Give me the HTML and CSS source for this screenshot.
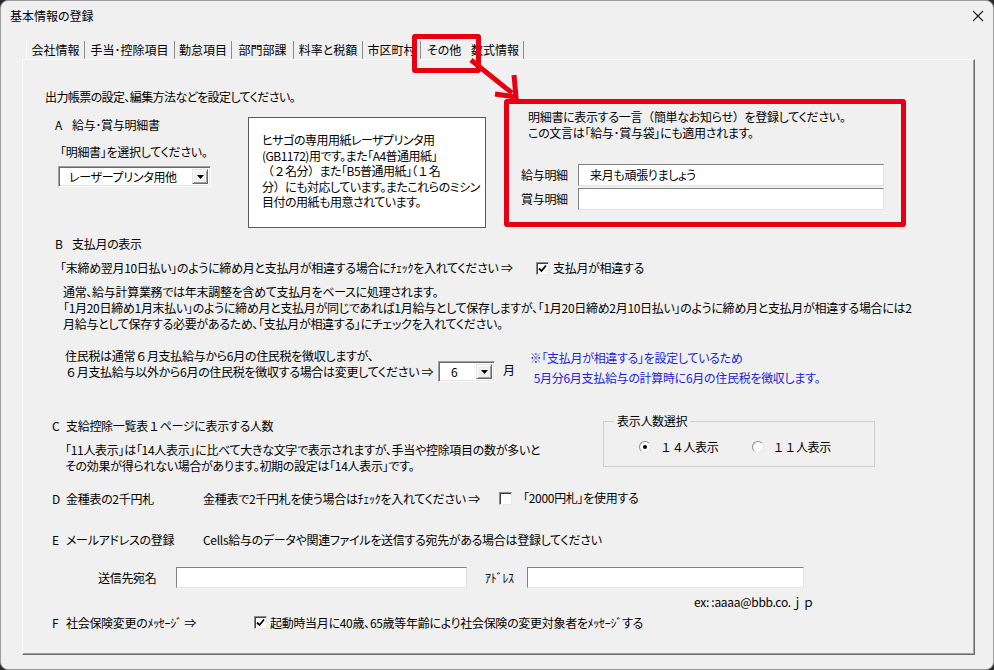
FILE: index.html
```html
<!DOCTYPE html>
<html lang="ja">
<head>
<meta charset="utf-8">
<title>基本情報の登録</title>
<link rel="stylesheet" href="styles.css">
</head>
<body>
<div class="window">
  <div class="titlebar">
    <span class="title">基本情報の登録</span>
    <svg class="close" width="12" height="12" viewBox="0 0 12 12"><path d="M1 1L11 11M11 1L1 11" stroke="#1a1a1a" stroke-width="1.1" fill="none"/></svg>
  </div>
  <div class="tabs">
    <span class="tab t1">会社情報</span>
    <span class="tab t2">手当･控除項目</span>
    <span class="tab t3">勤怠項目</span>
    <span class="tab t4">部門部課</span>
    <span class="tab t5">料率と税額</span>
    <span class="tab t6">市区町村</span>
    <span class="tab t7 active">その他</span>
    <span class="tab t8">数式情報</span>
  </div>
  <div class="panel">
    <div class="top">
      <div class="top-left">
        <div class="line intro">出力帳票の設定、編集方法などを設定してください。</div>
        <div class="a-row">
          <div class="a-col">
            <div class="line"><span class="key">A</span>給与･賞与明細書</div>
            <div class="line a-prompt">「明細書」を選択してください。</div>
            <div class="combo combo-a"><span class="combo-text">レーザープリンタ用他</span><span class="combo-btn"><svg width="7" height="4" viewBox="0 0 7 4"><path d="M0 0H7L3.5 4Z" fill="#000"/></svg></span></div>
          </div>
          <div class="infobox">ヒサゴの専用用紙レーザプリンタ用<br>(GB1172)用です。また「A4普通用紙」<br><span class="fw">（２</span>名分<span class="fw">）</span>また「B5普通用紙」<span class="fw">（１</span>名<br>分<span class="fw">）</span>にも対応しています。またこれらのミシン<br>目付の用紙も用意されています。</div>
        </div>
      </div>
      <div class="redbox">
        <div class="note">明細書に表示する一言<span class="fw">（</span>簡単なお知らせ<span class="fw">）</span>を登録してください。<br>この文言は「給与･賞与袋」にも適用されます。</div>
        <div class="msg-row first"><span class="msg-label">給与明細</span><div class="field msg-field">来月も頑張りましょう</div></div>
        <div class="msg-row"><span class="msg-label">賞与明細</span><div class="field msg-field"></div></div>
      </div>
    </div>

    <div class="line sec-b-title"><span class="key">B</span>支払月の表示</div>
    <div class="b-line">
      <span class="b-text">「末締め翌月10日払い」のように締め月と支払月が相違する場合にﾁｪｯｸを入れてください ⇒</span>
      <span class="check checked"><svg width="9" height="9" viewBox="0 0 9 9"><path d="M1 4.5L3.5 7L8 1.5" stroke="#000" stroke-width="1.8" fill="none"/></svg></span>
      <span class="check-label">支払月が相違する</span>
    </div>
    <div class="b-para">通常、給与計算業務では年末調整を含めて支払月をベースに処理されます。<br>「1月20日締め1月末払い」のように締め月と支払月が同じであれば1月給与として保存しますが、「1月20日締め2月10日払い」のように締め月と支払月が相違する場合には2<br>月給与として保存する必要があるため、「支払月が相違する」にチェックを入れてください。</div>
    <div class="b-tax">
      <div class="tax-text">住民税は通常<span class="fw">６</span>月支払給与から6月の住民税を徴収しますが、<br><span class="fw">６</span>月支払給与以外から6月の住民税を徴収する場合は変更してください ⇒</div>
      <div class="combo combo-m"><span class="combo-text">6</span><span class="combo-btn"><svg width="7" height="4" viewBox="0 0 7 4"><path d="M0 0H7L3.5 4Z" fill="#000"/></svg></span></div>
      <div class="month">月</div>
      <div class="blue">※「支払月が相違する」を設定しているため<br><span class="indent">5月分6月支払給与の計算時に6月の住民税を徴収します。</span></div>
    </div>

    <div class="sec-c">
      <div class="c-left">
        <div class="line"><span class="key short">C</span>支給控除一覧表<span class="fw">１</span>ページに表示する人数</div>
        <div class="c-text">「11人表示」は「14人表示」に比べて大きな文字で表示されますが、手当や控除項目の数が多いと<br>その効果が得られない場合があります。初期の設定は「14人表示」です。</div>
      </div>
      <fieldset class="group">
        <legend>表示人数選択</legend>
        <div class="radios">
          <span class="radio on"></span><span class="radio-label fw">１４人表示</span>
          <span class="radio second"></span><span class="radio-label fw">１１人表示</span>
        </div>
      </fieldset>
    </div>

    <div class="row sec-d">
      <span class="col1"><span class="key short">D</span>金種表の2千円札</span>
      <span class="col2">金種表で2千円札を使う場合はﾁｪｯｸを入れてください ⇒</span>
      <span class="check"></span>
      <span class="check-label d-label">「2000円札」を使用する</span>
    </div>

    <div class="row sec-e">
      <span class="col1"><span class="key short">E</span>メールアドレスの登録</span>
      <span>Cells給与のデータや関連ファイルを送信する宛先がある場合は登録してください</span>
    </div>
    <div class="e-fields">
      <span class="e-label">送信先宛名</span>
      <div class="field e-name"></div>
      <span class="e-label2">ｱﾄﾞﾚｽ</span>
      <div class="field e-addr"></div>
    </div>
    <div class="line e-ex">ex: :aaaa@bbb.co.<span class="fw">ｊｐ</span></div>

    <div class="row sec-f">
      <span class="f-col1"><span class="key short">F</span>社会保険変更のﾒｯｾｰｼﾞ ⇒</span>
      <span class="check checked"><svg width="9" height="9" viewBox="0 0 9 9"><path d="M1 4.5L3.5 7L8 1.5" stroke="#000" stroke-width="1.8" fill="none"/></svg></span>
      <span class="f-label">起動時当月に40歳、65歳等年齢により社会保険の変更対象者をﾒｯｾｰｼﾞする</span>
    </div>
  </div>
  <svg class="arrow" width="994" height="670" viewBox="0 0 994 670">
    <path d="M471 60L512 93" stroke="#e60012" stroke-width="5" fill="none"/>
    <path d="M495 94L516 97L514 75" stroke="#e60012" stroke-width="5" fill="none" stroke-linejoin="miter"/>
  </svg>
</div>
</body>
</html>
```

FILE: styles.css
```css
* { box-sizing: border-box; }
html, body { margin: 0; padding: 0; }
body {
  width: 994px;
  height: 670px;
  overflow: hidden;
  background: #2b2b2b;
  font-family: "Noto Sans CJK JP", "Noto Sans", sans-serif;
  font-size: 12px;
  color: #000;
  font-feature-settings: "palt";
}
.fw { font-feature-settings: normal; }
.window {
  position: relative;
  width: 994px;
  height: 670px;
  background: #f0f0f0;
  border: 1px solid #9c9c9c;
  border-radius: 8px;
}
.titlebar {
  height: 28px;
  display: flex;
  align-items: center;
  justify-content: space-between;
  padding: 2px 9px 0 9px;
}
.title { line-height: 16px; }
.close { display: block; }

.tabs {
  display: flex;
  margin: 12px 0 0 25px;
  height: 18px;
}
.tab {
  display: block;
  height: 18px;
  line-height: 17px;
  text-align: center;
  white-space: nowrap;
  border-right: 1px solid #8a8a8a;
}
.t1 { width: 59px; border-left: 1px solid #fff; }
.t2 { width: 90px; }
.t3 { width: 57px; }
.t4 { width: 62px; }
.t5 { width: 69px; }
.t6 { width: 58px; }
.t7 { width: 46px; border-right: none; }
.t8 { width: 57px; }
.active { position: relative; }
.active::after {
  content: "";
  position: absolute;
  left: -9px;
  top: -7px;
  width: 59px;
  height: 29px;
  border: 5px solid #e60012;
  border-radius: 3px;
  z-index: 2;
}

.panel {
  margin-left: 21px;
  width: 953px;
  height: 596px;
  border: 1px solid;
  border-color: #fff #6d6d6d #6d6d6d #fff;
  box-shadow: inset -1px -1px 0 #a0a0a0;
  letter-spacing: -0.3px;
}
.line { line-height: 16px; white-space: nowrap; }
.intro { letter-spacing: -0.6px; }
.key { display: inline-block; width: 17px; }
.key.short { width: 14px; }

.top { display: flex; align-items: flex-start; margin-top: 29px; }
.top-left { margin-left: 22px; }
.a-row { display: flex; margin-top: 12px; }
.a-col { margin-left: 10px; width: 193px; }
.a-prompt { margin-top: 11px; padding-left: 5px; }

.combo {
  display: flex;
  align-items: stretch;
  height: 21px;
  background: #fff;
  border: 1px solid;
  border-color: #a0a0a0 #fdfdfd #fdfdfd #a0a0a0;
  box-shadow: inset 1px 1px 0 #696969, inset -1px -1px 0 #e3e3e3;
  padding: 2px;
}
.combo-a { margin: 6px 0 0 3px; width: 153px; }
.combo-text { flex: 1; padding-left: 8px; line-height: 15px; white-space: nowrap; }
.combo-btn {
  width: 16px;
  background: #f0f0f0;
  border: 1px solid;
  border-color: #e3e3e3 #696969 #696969 #e3e3e3;
  box-shadow: inset 1px 1px 0 #fff, inset -1px -1px 0 #a0a0a0;
  display: flex;
  align-items: center;
  justify-content: center;
}
.combo-btn svg { display: block; }

.infobox {
  width: 238px;
  height: 111px;
  background: #fff;
  border: 1px solid #5a5a5a;
  padding: 14px 0 0 13px;
  line-height: 15.5px;
  white-space: nowrap;
  letter-spacing: -0.5px;
}

.redbox {
  margin: 10px 0 0 18px;
  width: 402px;
  height: 128px;
  border: 5px solid #e60012;
  border-radius: 3px;
  padding: 5px 0 0 12px;
}
.note { margin-left: 7px; line-height: 16px; white-space: nowrap; }
.msg-row { display: flex; align-items: center; margin-top: 2px; }
.msg-row.first { margin-top: 23px; }
.msg-label { width: 57px; line-height: 16px; }
.field {
  height: 22px;
  background: #fff;
  border: 1px solid;
  border-color: #828282 #e3e3e3 #e3e3e3 #828282;
  line-height: 20px;
  white-space: nowrap;
}
.msg-field { width: 306px; padding-left: 11px; }

.sec-b-title { margin: 8px 0 0 32px; }
.b-line { display: flex; align-items: center; margin: 8px 0 0 37px; height: 16px; }
.b-text { width: 476px; white-space: nowrap; line-height: 16px; }
.check {
  display: flex;
  align-items: center;
  justify-content: center;
  width: 13px;
  height: 13px;
  background: #fff;
  border: 1px solid;
  border-color: #8a8a8a #e8e8e8 #e8e8e8 #8a8a8a;
  box-shadow: inset 1px 1px 0 #404040;
}
.check svg { display: block; }
.check-label { margin-left: 4px; line-height: 16px; white-space: nowrap; }
.b-para { margin: 8px 0 0 40px; line-height: 16px; white-space: nowrap; }
.b-tax { display: flex; align-items: flex-start; margin: 16px 0 0 42px; }
.tax-text { width: 373px; line-height: 16px; white-space: nowrap; }
.combo-m { width: 57px; margin-top: 13px; }
.combo-m .combo-text { padding-left: 10px; }
.month { margin: 14px 0 0 8px; line-height: 16px; }
.blue { margin-left: 15px; line-height: 20px; color: #2424d6; white-space: nowrap; }
.indent { padding-left: 4px; }

.sec-c { display: flex; align-items: flex-start; margin-top: 25px; }
.c-left { margin: 5px 0 0 29px; width: 551px; }
.c-text { margin: 8px 0 0 13px; line-height: 16px; white-space: nowrap; }
.group {
  margin: 0;
  width: 272px;
  padding: 0 0 11px 10px;
  border: 1px solid #cdcdcd;
  min-inline-size: 0;
}
.group legend { padding: 0 3px; line-height: 16px; }
.radios { display: flex; align-items: center; height: 16px; margin-top: 10px; }
.radio {
  width: 12px;
  height: 12px;
  border-radius: 50%;
  background: #fff;
  border: 1px solid;
  border-color: #8a8a8a #e3e3e3 #e3e3e3 #8a8a8a;
  margin-left: 25px;
  position: relative;
}
.radio.on::after {
  content: "";
  position: absolute;
  left: 3px;
  top: 3px;
  width: 4px;
  height: 4px;
  border-radius: 50%;
  background: #000;
}
.radio.second { margin-left: 33px; }
.radio-label { margin-left: 9px; line-height: 16px; }

.row { display: flex; align-items: center; height: 16px; margin-left: 29px; white-space: nowrap; }
.col1 { width: 151px; }
.col2 { width: 296px; }
.sec-d { margin-top: 16px; }
.d-label { margin-left: 11px; }
.sec-e { margin-top: 25px; }
.e-fields { display: flex; align-items: center; margin: 20px 0 0 75px; }
.e-label { width: 78px; line-height: 16px; }
.e-name { width: 291px; height: 21px; }
.e-label2 { margin-left: 18px; width: 42px; line-height: 16px; }
.e-addr { width: 277px; height: 21px; }
.e-ex { margin: 6px 0 0 671px; }
.sec-f { margin-top: 4px; }
.f-col1 { width: 202px; }
.f-label { margin-left: 3px; }

.arrow { position: absolute; left: -1px; top: -1px; pointer-events: none; z-index: 3; }
```
